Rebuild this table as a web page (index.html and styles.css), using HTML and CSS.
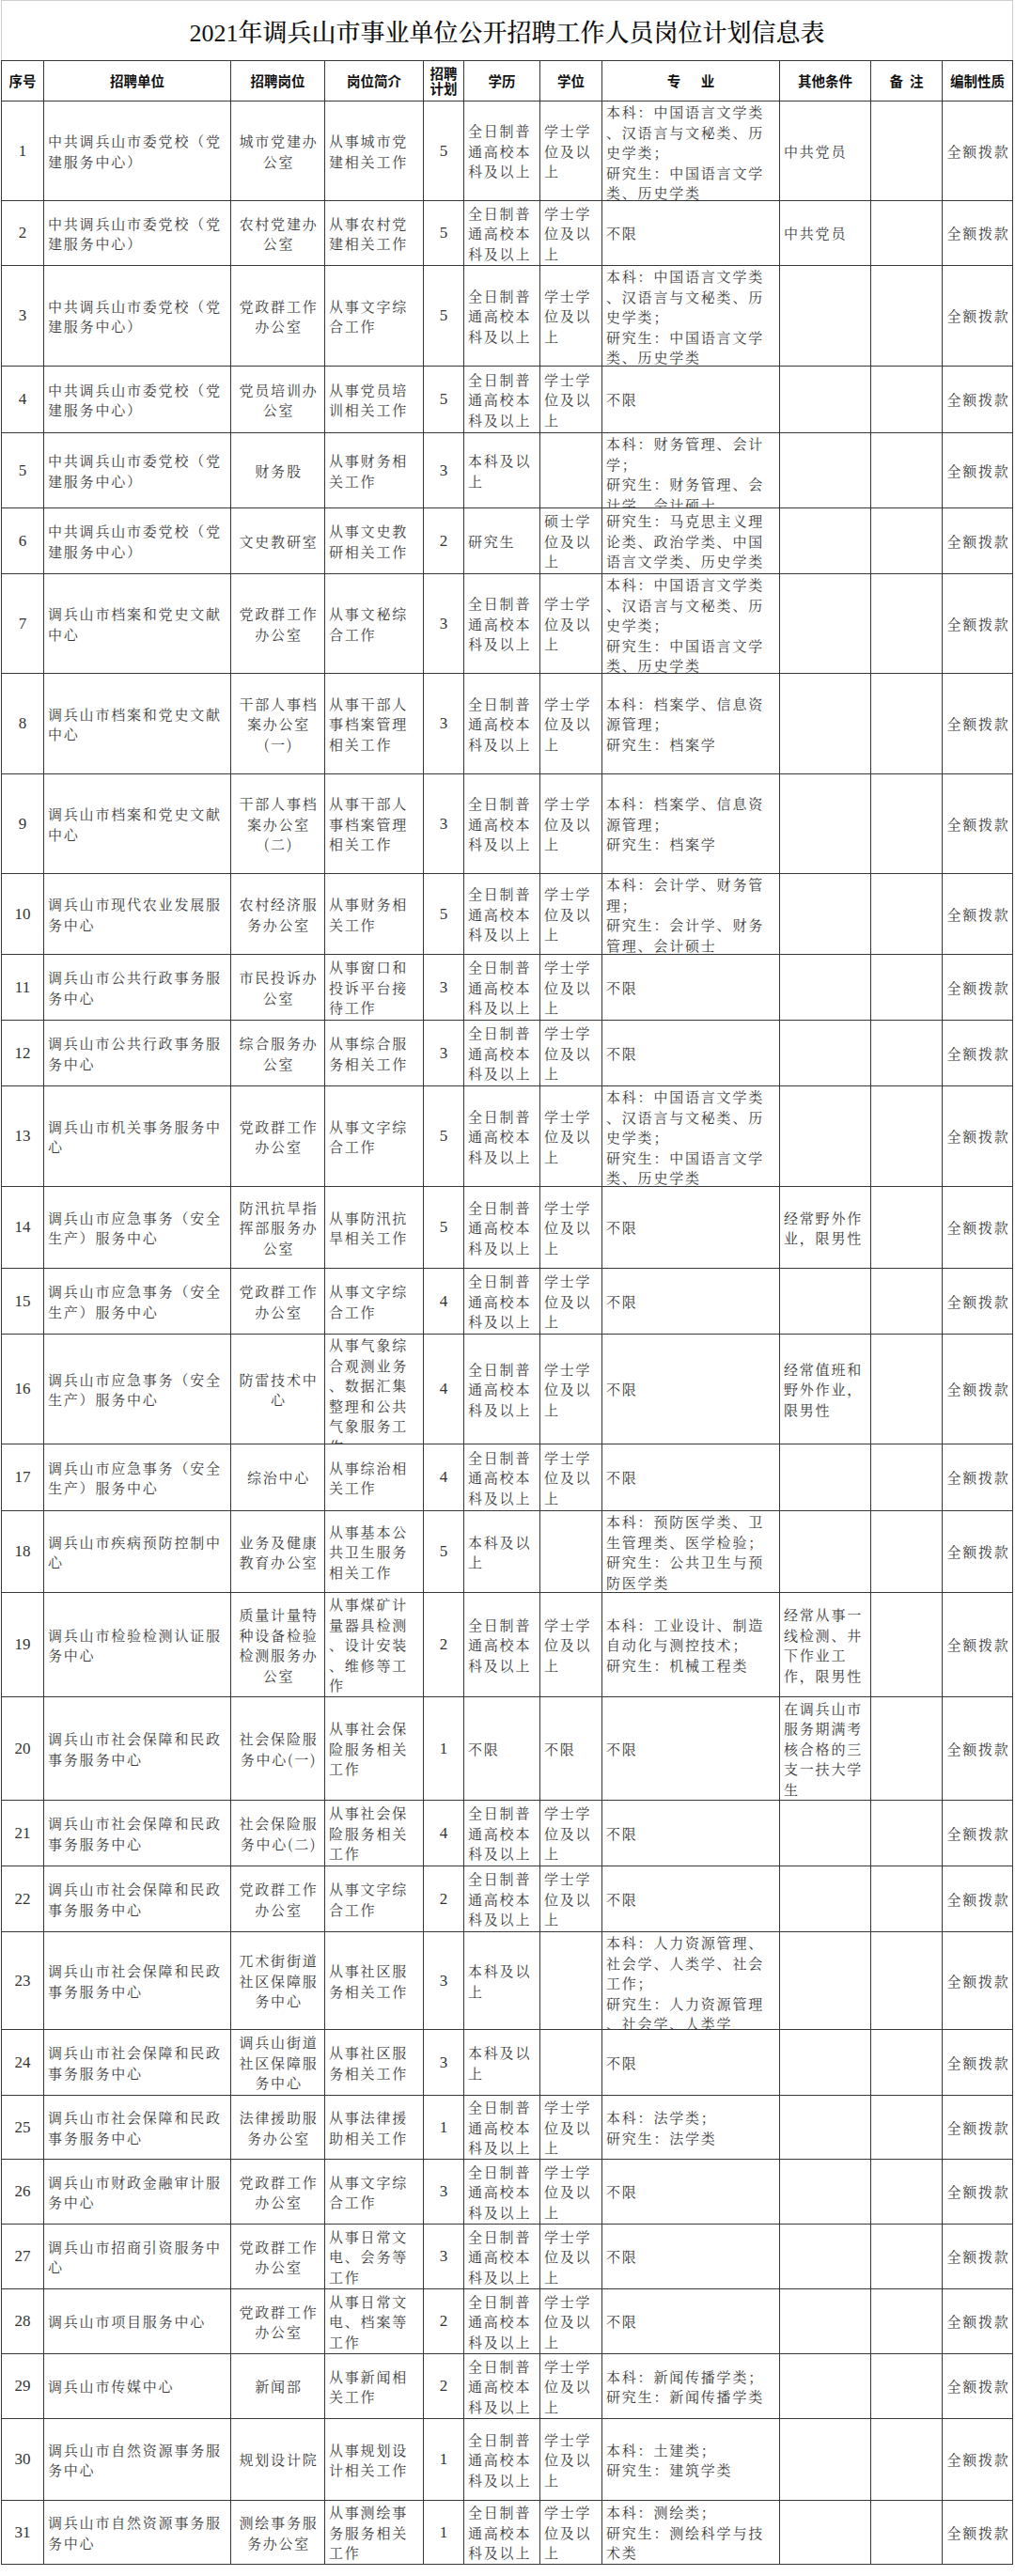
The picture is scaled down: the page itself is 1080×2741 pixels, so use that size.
FILE: index.html
```html
<!DOCTYPE html>
<html lang="zh-CN">
<head>
<meta charset="utf-8">
<title>2021年调兵山市事业单位公开招聘工作人员岗位计划信息表</title>
<link rel="stylesheet" href="styles.css">
</head>
<body>
<div class="page">
  <div class="title">2021年调兵山市事业单位公开招聘工作人员岗位计划信息表</div>
  <div class="sheet">
    <div class="th">序号</div>
    <div class="th">招聘单位</div>
    <div class="th">招聘岗位</div>
    <div class="th">岗位简介</div>
    <div class="th">招聘<br>计划</div>
    <div class="th">学历</div>
    <div class="th">学位</div>
    <div class="th">专&emsp;&ensp;业</div>
    <div class="th">其他条件</div>
    <div class="th">备&ensp;注</div>
    <div class="th">编制性质</div>

    <div class="td num">1</div>
    <div class="td l">中共调兵山市委党校（党<br>建服务中心）</div>
    <div class="td c">城市党建办<br>公室</div>
    <div class="td l">从事城市党<br>建相关工作</div>
    <div class="td num">5</div>
    <div class="td l">全日制普<br>通高校本<br>科及以上</div>
    <div class="td l">学士学<br>位及以<br>上</div>
    <div class="td l">本科：中国语言文学类<br>、汉语言与文秘类、历<br>史学类；<br>研究生：中国语言文学<br>类、历史学类</div>
    <div class="td l">中共党员</div>
    <div class="td"></div>
    <div class="td c">全额拨款</div>

    <div class="td num">2</div>
    <div class="td l">中共调兵山市委党校（党<br>建服务中心）</div>
    <div class="td c">农村党建办<br>公室</div>
    <div class="td l">从事农村党<br>建相关工作</div>
    <div class="td num">5</div>
    <div class="td l">全日制普<br>通高校本<br>科及以上</div>
    <div class="td l">学士学<br>位及以<br>上</div>
    <div class="td l">不限</div>
    <div class="td l">中共党员</div>
    <div class="td"></div>
    <div class="td c">全额拨款</div>

    <div class="td num">3</div>
    <div class="td l">中共调兵山市委党校（党<br>建服务中心）</div>
    <div class="td c">党政群工作<br>办公室</div>
    <div class="td l">从事文字综<br>合工作</div>
    <div class="td num">5</div>
    <div class="td l">全日制普<br>通高校本<br>科及以上</div>
    <div class="td l">学士学<br>位及以<br>上</div>
    <div class="td l">本科：中国语言文学类<br>、汉语言与文秘类、历<br>史学类；<br>研究生：中国语言文学<br>类、历史学类</div>
    <div class="td"></div>
    <div class="td"></div>
    <div class="td c">全额拨款</div>

    <div class="td num">4</div>
    <div class="td l">中共调兵山市委党校（党<br>建服务中心）</div>
    <div class="td c">党员培训办<br>公室</div>
    <div class="td l">从事党员培<br>训相关工作</div>
    <div class="td num">5</div>
    <div class="td l">全日制普<br>通高校本<br>科及以上</div>
    <div class="td l">学士学<br>位及以<br>上</div>
    <div class="td l">不限</div>
    <div class="td"></div>
    <div class="td"></div>
    <div class="td c">全额拨款</div>

    <div class="td num">5</div>
    <div class="td l">中共调兵山市委党校（党<br>建服务中心）</div>
    <div class="td c">财务股</div>
    <div class="td l">从事财务相<br>关工作</div>
    <div class="td num">3</div>
    <div class="td l">本科及以<br>上</div>
    <div class="td"></div>
    <div class="td l">本科：财务管理、会计<br>学；<br>研究生：财务管理、会<br>计学、会计硕士</div>
    <div class="td"></div>
    <div class="td"></div>
    <div class="td c">全额拨款</div>

    <div class="td num">6</div>
    <div class="td l">中共调兵山市委党校（党<br>建服务中心）</div>
    <div class="td c">文史教研室</div>
    <div class="td l">从事文史教<br>研相关工作</div>
    <div class="td num">2</div>
    <div class="td l">研究生</div>
    <div class="td l">硕士学<br>位及以<br>上</div>
    <div class="td l">研究生：马克思主义理<br>论类、政治学类、中国<br>语言文学类、历史学类</div>
    <div class="td"></div>
    <div class="td"></div>
    <div class="td c">全额拨款</div>

    <div class="td num">7</div>
    <div class="td l">调兵山市档案和党史文献<br>中心</div>
    <div class="td c">党政群工作<br>办公室</div>
    <div class="td l">从事文秘综<br>合工作</div>
    <div class="td num">3</div>
    <div class="td l">全日制普<br>通高校本<br>科及以上</div>
    <div class="td l">学士学<br>位及以<br>上</div>
    <div class="td l">本科：中国语言文学类<br>、汉语言与文秘类、历<br>史学类；<br>研究生：中国语言文学<br>类、历史学类</div>
    <div class="td"></div>
    <div class="td"></div>
    <div class="td c">全额拨款</div>

    <div class="td num">8</div>
    <div class="td l">调兵山市档案和党史文献<br>中心</div>
    <div class="td c">干部人事档<br>案办公室<br>(一)</div>
    <div class="td l">从事干部人<br>事档案管理<br>相关工作</div>
    <div class="td num">3</div>
    <div class="td l">全日制普<br>通高校本<br>科及以上</div>
    <div class="td l">学士学<br>位及以<br>上</div>
    <div class="td l">本科：档案学、信息资<br>源管理；<br>研究生：档案学</div>
    <div class="td"></div>
    <div class="td"></div>
    <div class="td c">全额拨款</div>

    <div class="td num">9</div>
    <div class="td l">调兵山市档案和党史文献<br>中心</div>
    <div class="td c">干部人事档<br>案办公室<br>(二)</div>
    <div class="td l">从事干部人<br>事档案管理<br>相关工作</div>
    <div class="td num">3</div>
    <div class="td l">全日制普<br>通高校本<br>科及以上</div>
    <div class="td l">学士学<br>位及以<br>上</div>
    <div class="td l">本科：档案学、信息资<br>源管理；<br>研究生：档案学</div>
    <div class="td"></div>
    <div class="td"></div>
    <div class="td c">全额拨款</div>

    <div class="td num">10</div>
    <div class="td l">调兵山市现代农业发展服<br>务中心</div>
    <div class="td c">农村经济服<br>务办公室</div>
    <div class="td l">从事财务相<br>关工作</div>
    <div class="td num">5</div>
    <div class="td l">全日制普<br>通高校本<br>科及以上</div>
    <div class="td l">学士学<br>位及以<br>上</div>
    <div class="td l">本科：会计学、财务管<br>理；<br>研究生：会计学、财务<br>管理、会计硕士</div>
    <div class="td"></div>
    <div class="td"></div>
    <div class="td c">全额拨款</div>

    <div class="td num">11</div>
    <div class="td l">调兵山市公共行政事务服<br>务中心</div>
    <div class="td c">市民投诉办<br>公室</div>
    <div class="td l">从事窗口和<br>投诉平台接<br>待工作</div>
    <div class="td num">3</div>
    <div class="td l">全日制普<br>通高校本<br>科及以上</div>
    <div class="td l">学士学<br>位及以<br>上</div>
    <div class="td l">不限</div>
    <div class="td"></div>
    <div class="td"></div>
    <div class="td c">全额拨款</div>

    <div class="td num">12</div>
    <div class="td l">调兵山市公共行政事务服<br>务中心</div>
    <div class="td c">综合服务办<br>公室</div>
    <div class="td l">从事综合服<br>务相关工作</div>
    <div class="td num">3</div>
    <div class="td l">全日制普<br>通高校本<br>科及以上</div>
    <div class="td l">学士学<br>位及以<br>上</div>
    <div class="td l">不限</div>
    <div class="td"></div>
    <div class="td"></div>
    <div class="td c">全额拨款</div>

    <div class="td num">13</div>
    <div class="td l">调兵山市机关事务服务中<br>心</div>
    <div class="td c">党政群工作<br>办公室</div>
    <div class="td l">从事文字综<br>合工作</div>
    <div class="td num">5</div>
    <div class="td l">全日制普<br>通高校本<br>科及以上</div>
    <div class="td l">学士学<br>位及以<br>上</div>
    <div class="td l">本科：中国语言文学类<br>、汉语言与文秘类、历<br>史学类；<br>研究生：中国语言文学<br>类、历史学类</div>
    <div class="td"></div>
    <div class="td"></div>
    <div class="td c">全额拨款</div>

    <div class="td num">14</div>
    <div class="td l">调兵山市应急事务（安全<br>生产）服务中心</div>
    <div class="td c">防汛抗旱指<br>挥部服务办<br>公室</div>
    <div class="td l">从事防汛抗<br>旱相关工作</div>
    <div class="td num">5</div>
    <div class="td l">全日制普<br>通高校本<br>科及以上</div>
    <div class="td l">学士学<br>位及以<br>上</div>
    <div class="td l">不限</div>
    <div class="td l">经常野外作<br>业，限男性</div>
    <div class="td"></div>
    <div class="td c">全额拨款</div>

    <div class="td num">15</div>
    <div class="td l">调兵山市应急事务（安全<br>生产）服务中心</div>
    <div class="td c">党政群工作<br>办公室</div>
    <div class="td l">从事文字综<br>合工作</div>
    <div class="td num">4</div>
    <div class="td l">全日制普<br>通高校本<br>科及以上</div>
    <div class="td l">学士学<br>位及以<br>上</div>
    <div class="td l">不限</div>
    <div class="td"></div>
    <div class="td"></div>
    <div class="td c">全额拨款</div>

    <div class="td num">16</div>
    <div class="td l">调兵山市应急事务（安全<br>生产）服务中心</div>
    <div class="td c">防雷技术中<br>心</div>
    <div class="td l">从事气象综<br>合观测业务<br>、数据汇集<br>整理和公共<br>气象服务工<br>作</div>
    <div class="td num">4</div>
    <div class="td l">全日制普<br>通高校本<br>科及以上</div>
    <div class="td l">学士学<br>位及以<br>上</div>
    <div class="td l">不限</div>
    <div class="td l">经常值班和<br>野外作业，<br>限男性</div>
    <div class="td"></div>
    <div class="td c">全额拨款</div>

    <div class="td num">17</div>
    <div class="td l">调兵山市应急事务（安全<br>生产）服务中心</div>
    <div class="td c">综治中心</div>
    <div class="td l">从事综治相<br>关工作</div>
    <div class="td num">4</div>
    <div class="td l">全日制普<br>通高校本<br>科及以上</div>
    <div class="td l">学士学<br>位及以<br>上</div>
    <div class="td l">不限</div>
    <div class="td"></div>
    <div class="td"></div>
    <div class="td c">全额拨款</div>

    <div class="td num">18</div>
    <div class="td l">调兵山市疾病预防控制中<br>心</div>
    <div class="td c">业务及健康<br>教育办公室</div>
    <div class="td l">从事基本公<br>共卫生服务<br>相关工作</div>
    <div class="td num">5</div>
    <div class="td l">本科及以<br>上</div>
    <div class="td"></div>
    <div class="td l">本科：预防医学类、卫<br>生管理类、医学检验；<br>研究生：公共卫生与预<br>防医学类</div>
    <div class="td"></div>
    <div class="td"></div>
    <div class="td c">全额拨款</div>

    <div class="td num">19</div>
    <div class="td l">调兵山市检验检测认证服<br>务中心</div>
    <div class="td c">质量计量特<br>种设备检验<br>检测服务办<br>公室</div>
    <div class="td l">从事煤矿计<br>量器具检测<br>、设计安装<br>、维修等工<br>作</div>
    <div class="td num">2</div>
    <div class="td l">全日制普<br>通高校本<br>科及以上</div>
    <div class="td l">学士学<br>位及以<br>上</div>
    <div class="td l">本科：工业设计、制造<br>自动化与测控技术；<br>研究生：机械工程类</div>
    <div class="td l">经常从事一<br>线检测、井<br>下作业工<br>作，限男性</div>
    <div class="td"></div>
    <div class="td c">全额拨款</div>

    <div class="td num">20</div>
    <div class="td l">调兵山市社会保障和民政<br>事务服务中心</div>
    <div class="td c">社会保险服<br>务中心(一)</div>
    <div class="td l">从事社会保<br>险服务相关<br>工作</div>
    <div class="td num">1</div>
    <div class="td l">不限</div>
    <div class="td l">不限</div>
    <div class="td l">不限</div>
    <div class="td l">在调兵山市<br>服务期满考<br>核合格的三<br>支一扶大学<br>生</div>
    <div class="td"></div>
    <div class="td c">全额拨款</div>

    <div class="td num">21</div>
    <div class="td l">调兵山市社会保障和民政<br>事务服务中心</div>
    <div class="td c">社会保险服<br>务中心(二)</div>
    <div class="td l">从事社会保<br>险服务相关<br>工作</div>
    <div class="td num">4</div>
    <div class="td l">全日制普<br>通高校本<br>科及以上</div>
    <div class="td l">学士学<br>位及以<br>上</div>
    <div class="td l">不限</div>
    <div class="td"></div>
    <div class="td"></div>
    <div class="td c">全额拨款</div>

    <div class="td num">22</div>
    <div class="td l">调兵山市社会保障和民政<br>事务服务中心</div>
    <div class="td c">党政群工作<br>办公室</div>
    <div class="td l">从事文字综<br>合工作</div>
    <div class="td num">2</div>
    <div class="td l">全日制普<br>通高校本<br>科及以上</div>
    <div class="td l">学士学<br>位及以<br>上</div>
    <div class="td l">不限</div>
    <div class="td"></div>
    <div class="td"></div>
    <div class="td c">全额拨款</div>

    <div class="td num">23</div>
    <div class="td l">调兵山市社会保障和民政<br>事务服务中心</div>
    <div class="td c">兀术街街道<br>社区保障服<br>务中心</div>
    <div class="td l">从事社区服<br>务相关工作</div>
    <div class="td num">3</div>
    <div class="td l">本科及以<br>上</div>
    <div class="td"></div>
    <div class="td l">本科：人力资源管理、<br>社会学、人类学、社会<br>工作；<br>研究生：人力资源管理<br>、社会学、人类学</div>
    <div class="td"></div>
    <div class="td"></div>
    <div class="td c">全额拨款</div>

    <div class="td num">24</div>
    <div class="td l">调兵山市社会保障和民政<br>事务服务中心</div>
    <div class="td c">调兵山街道<br>社区保障服<br>务中心</div>
    <div class="td l">从事社区服<br>务相关工作</div>
    <div class="td num">3</div>
    <div class="td l">本科及以<br>上</div>
    <div class="td"></div>
    <div class="td l">不限</div>
    <div class="td"></div>
    <div class="td"></div>
    <div class="td c">全额拨款</div>

    <div class="td num">25</div>
    <div class="td l">调兵山市社会保障和民政<br>事务服务中心</div>
    <div class="td c">法律援助服<br>务办公室</div>
    <div class="td l">从事法律援<br>助相关工作</div>
    <div class="td num">1</div>
    <div class="td l">全日制普<br>通高校本<br>科及以上</div>
    <div class="td l">学士学<br>位及以<br>上</div>
    <div class="td l">本科：法学类；<br>研究生：法学类</div>
    <div class="td"></div>
    <div class="td"></div>
    <div class="td c">全额拨款</div>

    <div class="td num">26</div>
    <div class="td l">调兵山市财政金融审计服<br>务中心</div>
    <div class="td c">党政群工作<br>办公室</div>
    <div class="td l">从事文字综<br>合工作</div>
    <div class="td num">3</div>
    <div class="td l">全日制普<br>通高校本<br>科及以上</div>
    <div class="td l">学士学<br>位及以<br>上</div>
    <div class="td l">不限</div>
    <div class="td"></div>
    <div class="td"></div>
    <div class="td c">全额拨款</div>

    <div class="td num">27</div>
    <div class="td l">调兵山市招商引资服务中<br>心</div>
    <div class="td c">党政群工作<br>办公室</div>
    <div class="td l">从事日常文<br>电、会务等<br>工作</div>
    <div class="td num">3</div>
    <div class="td l">全日制普<br>通高校本<br>科及以上</div>
    <div class="td l">学士学<br>位及以<br>上</div>
    <div class="td l">不限</div>
    <div class="td"></div>
    <div class="td"></div>
    <div class="td c">全额拨款</div>

    <div class="td num">28</div>
    <div class="td l">调兵山市项目服务中心</div>
    <div class="td c">党政群工作<br>办公室</div>
    <div class="td l">从事日常文<br>电、档案等<br>工作</div>
    <div class="td num">2</div>
    <div class="td l">全日制普<br>通高校本<br>科及以上</div>
    <div class="td l">学士学<br>位及以<br>上</div>
    <div class="td l">不限</div>
    <div class="td"></div>
    <div class="td"></div>
    <div class="td c">全额拨款</div>

    <div class="td num">29</div>
    <div class="td l">调兵山市传媒中心</div>
    <div class="td c">新闻部</div>
    <div class="td l">从事新闻相<br>关工作</div>
    <div class="td num">2</div>
    <div class="td l">全日制普<br>通高校本<br>科及以上</div>
    <div class="td l">学士学<br>位及以<br>上</div>
    <div class="td l">本科：新闻传播学类；<br>研究生：新闻传播学类</div>
    <div class="td"></div>
    <div class="td"></div>
    <div class="td c">全额拨款</div>

    <div class="td num">30</div>
    <div class="td l">调兵山市自然资源事务服<br>务中心</div>
    <div class="td c">规划设计院</div>
    <div class="td l">从事规划设<br>计相关工作</div>
    <div class="td num">1</div>
    <div class="td l">全日制普<br>通高校本<br>科及以上</div>
    <div class="td l">学士学<br>位及以<br>上</div>
    <div class="td l">本科：土建类；<br>研究生：建筑学类</div>
    <div class="td"></div>
    <div class="td"></div>
    <div class="td c">全额拨款</div>

    <div class="td num">31</div>
    <div class="td l">调兵山市自然资源事务服<br>务中心</div>
    <div class="td c">测绘事务服<br>务办公室</div>
    <div class="td l">从事测绘事<br>务服务相关<br>工作</div>
    <div class="td num">1</div>
    <div class="td l">全日制普<br>通高校本<br>科及以上</div>
    <div class="td l">学士学<br>位及以<br>上</div>
    <div class="td l">本科：测绘类；<br>研究生：测绘科学与技<br>术类</div>
    <div class="td"></div>
    <div class="td"></div>
    <div class="td c">全额拨款</div>
  </div>
</div>
</body>
</html>
```

FILE: styles.css
```css
html, body {
  margin: 0;
  padding: 0;
  background: #ffffff;
}

body {
  font-family: "Noto Serif CJK SC", "Noto Sans CJK SC", sans-serif;
  color: #333333;
}

.page {
  width: 1080px;
  padding-left: 1px;
  box-sizing: border-box;
}

.title {
  box-sizing: border-box;
  width: 1077px;
  height: 64px;
  border: 1px solid #cfcfcf;
  border-bottom: 0;
  display: flex;
  align-items: center;
  justify-content: center;
  font-family: "Liberation Serif", "Noto Serif CJK SC", "Noto Sans CJK SC", serif;
  font-size: 26px;
  font-weight: 500;
  color: #111111;
  letter-spacing: 0;
}

.sheet {
  display: grid;
  width: max-content;
  grid-template-columns: 44px 198px 99px 104px 42px 80px 65px 188px 96px 75px 74px;
  grid-template-rows:
    42px 105px 68px 106px 70px 79px 69px 105px 106px 105px 85px
    69px 69px 106px 86px 69px 116px 70px 86px 110px 109px
    69px 69px 103px 69px 67px 68px 68px 68px 68px 86px 67px;
  gap: 1px;
  background: #383838;
  border: 1px solid #383838;
}

.sheet > div {
  background: #ffffff;
  overflow: hidden;
  display: flex;
  align-items: center;
  align-items: safe center;
  min-width: 0;
  min-height: 0;
}

.th {
  justify-content: center;
  text-align: center;
  font-family: "Noto Sans CJK SC", sans-serif;
  font-weight: 700;
  font-size: 14.5px;
  line-height: 16px;
  color: #111111;
}

.td {
  font-size: 15px;
  letter-spacing: 1.8px;
  line-height: 21.5px;
  color: #3a3a3a;
  white-space: nowrap;
  padding: 0 2px 0 4px;
}

.l {
  justify-content: flex-start;
  text-align: left;
}

.c {
  justify-content: center;
  text-align: center;
}

.num {
  justify-content: center;
  text-align: center;
  font-family: "Liberation Serif", serif;
  font-size: 17px;
  letter-spacing: 0;
  color: #333333;
  padding: 0;
}
```
